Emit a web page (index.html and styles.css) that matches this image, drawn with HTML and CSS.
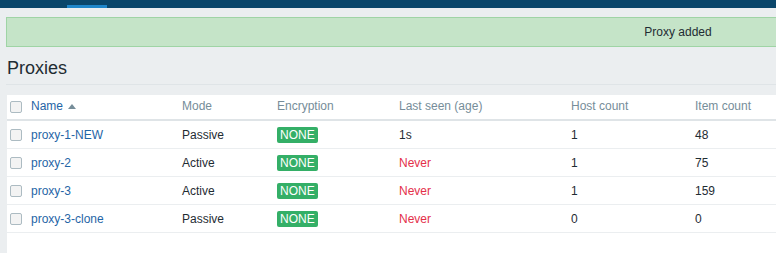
FILE: index.html
```html
<!DOCTYPE html>
<html lang="en">
<head>
    <meta charset="UTF-8">
    <title>Proxies</title>
    <link rel="stylesheet" href="styles.css">
</head>
<body>

<div class="top-nav">
    <div class="nav-tab"></div>
    <div class="nav-tab active"></div>
</div>

<div class="wrapper">
    <div class="msg-good">Proxy added</div>

    <div class="header-title">
        <h1>Proxies</h1>
    </div>

    <div class="table-panel">
        <table class="list-table">
            <colgroup>
                <col class="col-check">
                <col class="col-name">
                <col class="col-mode">
                <col class="col-enc">
                <col class="col-seen">
                <col class="col-hosts">
                <col>
            </colgroup>
            <thead>
                <tr>
                    <th><span class="checkbox"></span></th>
                    <th><a href="#" class="sort-link">Name <span class="arrow-up"></span></a></th>
                    <th>Mode</th>
                    <th>Encryption</th>
                    <th>Last seen (age)</th>
                    <th>Host count</th>
                    <th>Item count</th>
                </tr>
            </thead>
            <tbody>
                <tr>
                    <td><span class="checkbox"></span></td>
                    <td><a href="#">proxy-1-NEW</a></td>
                    <td>Passive</td>
                    <td><span class="status-green">NONE</span></td>
                    <td>1s</td>
                    <td>1</td>
                    <td>48</td>
                </tr>
                <tr>
                    <td><span class="checkbox"></span></td>
                    <td><a href="#">proxy-2</a></td>
                    <td>Active</td>
                    <td><span class="status-green">NONE</span></td>
                    <td class="red">Never</td>
                    <td>1</td>
                    <td>75</td>
                </tr>
                <tr>
                    <td><span class="checkbox"></span></td>
                    <td><a href="#">proxy-3</a></td>
                    <td>Active</td>
                    <td><span class="status-green">NONE</span></td>
                    <td class="red">Never</td>
                    <td>1</td>
                    <td>159</td>
                </tr>
                <tr>
                    <td><span class="checkbox"></span></td>
                    <td><a href="#">proxy-3-clone</a></td>
                    <td>Passive</td>
                    <td><span class="status-green">NONE</span></td>
                    <td class="red">Never</td>
                    <td>0</td>
                    <td>0</td>
                </tr>
            </tbody>
        </table>
    </div>
</div>

</body>
</html>
```

FILE: styles.css
```css
body {
    margin: 0;
    padding: 0;
    font-family: Arial, "Liberation Sans", sans-serif;
    font-size: 12px;
    color: #1f2c33;
    background-color: #ebeef0;
    overflow: hidden;
}

a {
    color: #1f65a6;
    text-decoration: none;
}

.top-nav {
    display: flex;
    height: 8px;
    background-color: #0a466a;
    padding-left: 7px;
}

.nav-tab {
    width: 60px;
}

.nav-tab.active {
    width: 40px;
    margin-top: 5px;
    height: 3px;
    background-color: #1f86c9;
}

.wrapper {
    padding: 9px 0 0 6px;
    width: 1344px;
}

.msg-good {
    height: 28px;
    line-height: 28px;
    text-align: center;
    font-size: 12px;
    color: #1f2c33;
    background-color: #c5e4c8;
    border: 1px solid #9fd4a5;
}

.header-title {
    border-bottom: 1px solid #dfe4e7;
}

.header-title h1 {
    margin: 0;
    padding: 12px 0 7px 1px;
    font-size: 18px;
    font-weight: normal;
    line-height: 18px;
    color: #1f2c33;
}

.table-panel {
    margin: 10px 0 0 1px;
    background-color: #ffffff;
    height: 200px;
}

.list-table {
    width: 790px;
    border-collapse: collapse;
    table-layout: fixed;
}

.col-check { width: 19px; }
.col-name { width: 151px; }
.col-mode { width: 95px; }
.col-enc { width: 122px; }
.col-seen { width: 172px; }
.col-hosts { width: 124px; }

.list-table th {
    height: 22px;
    padding: 0 5px 2px;
    text-align: left;
    font-weight: normal;
    color: #768d99;
    border-bottom: 2px solid #dfe4e7;
    white-space: nowrap;
}

.list-table td {
    height: 27px;
    padding: 0 5px;
    border-bottom: 1px solid #ebeef0;
    white-space: nowrap;
}

.list-table th:first-child,
.list-table td:first-child {
    padding: 0 0 0 3px;
}

.checkbox {
    display: block;
    width: 10px;
    height: 10px;
    border: 1px solid #acbbc2;
    border-radius: 2px;
    background-color: #f3f3f3;
}

.arrow-up {
    display: inline-block;
    width: 0;
    height: 0;
    margin-left: 2px;
    vertical-align: 1px;
    border-left: 4px solid transparent;
    border-right: 4px solid transparent;
    border-bottom: 5px solid #768d99;
}

.status-green {
    display: inline-block;
    padding: 1px 3px;
    line-height: 14px;
    color: #ffffff;
    background-color: #34af67;
    border-radius: 2px;
    vertical-align: middle;
}

.red {
    color: #e4304a;
}
```
